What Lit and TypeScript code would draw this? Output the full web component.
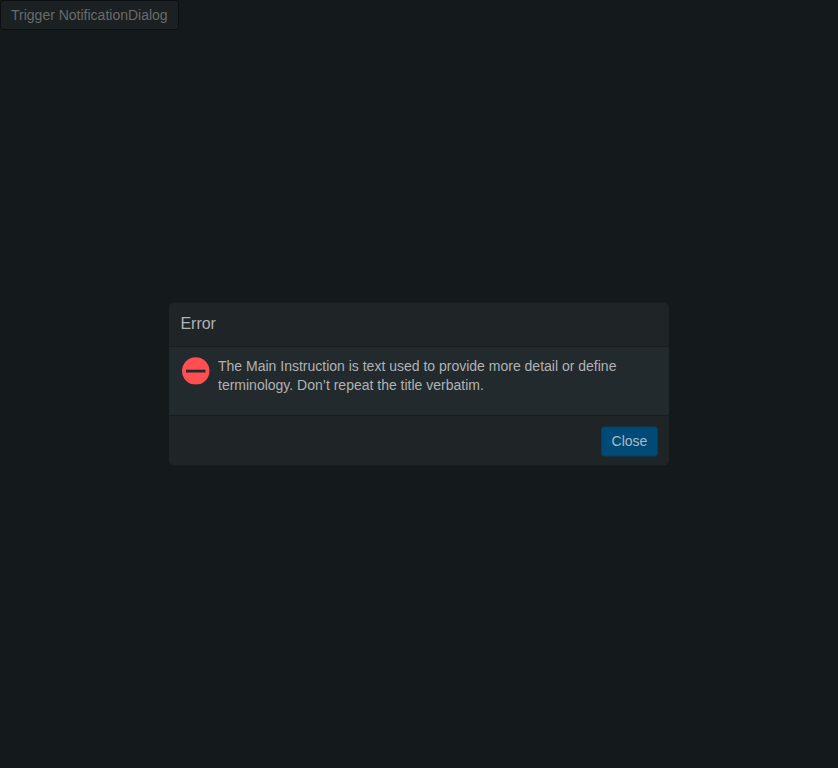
import { LitElement, html, css } from "lit";
import { customElement } from "lit/decorators.js";

@customElement("app-root")
export class AppRoot extends LitElement {
  static styles = css`
    :host {
      display: block;
      position: relative;
      height: 100vh;
      overflow: hidden;
      background: #14191c;
      font-family: "Liberation Sans", Arial, sans-serif;
      font-size: 14px;
    }
    button {
      box-sizing: border-box;
      display: block;
      margin: 0;
      padding: 0 10px;
      height: 30px;
      font: inherit;
      line-height: 28px;
      border-radius: 3px;
    }
    .trigger {
      color: #696b6b;
      background: #1b2022;
      border: 1px solid #0c0f11;
    }
    .dialog {
      position: absolute;
      top: 50%;
      left: 50%;
      transform: translate(-50%, -50%);
      width: 500px;
      height: 163px;
      display: flex;
      flex-direction: column;
      border-radius: 5px;
      overflow: hidden;
      background: #1f2427;
      color: #b0b2b3;
    }
    .header {
      box-sizing: border-box;
      height: 43px;
      padding: 0 11.4px;
      font-size: 16px;
      line-height: 42px;
    }
    .rule {
      height: 1px;
      background: #181c1f;
      transform: translateY(0.5px);
    }
    .content {
      flex: 1;
      display: flex;
      gap: 8px;
      padding: 10px 13px 0;
      background: #232a2e;
    }
    .icon {
      flex: none;
      width: 28px;
      height: 28px;
    }
    .message {
      margin: 0;
      line-height: 19px;
    }
    .footer {
      box-sizing: border-box;
      height: 50px;
      padding: 11px 11px 0;
      display: flex;
      justify-content: flex-end;
    }
    .close {
      width: 57px;
      padding: 0 0 1px;
      line-height: 27px;
      text-align: center;
      color: #acb9c1;
      background: #004a78;
      border: 1px solid #06405f;
    }
  `;

  render() {
    return html`
      <button class="trigger">Trigger NotificationDialog</button>
      <section class="dialog" role="dialog" aria-label="Error">
        <div class="header">Error</div>
        <div class="rule"></div>
        <div class="content">
          <svg class="icon" viewBox="0 0 28 28" aria-hidden="true">
            <circle cx="13.75" cy="14.5" r="13.7" fill="#ff4f52" />
            <rect x="4" y="13.2" width="19.5" height="2.8" fill="#232a2e" />
          </svg>
          <p class="message">
            The Main Instruction is text used to provide more detail or define<br />terminology. Don’t repeat the title verbatim.
          </p>
        </div>
        <div class="rule"></div>
        <div class="footer"><button class="close">Close</button></div>
      </section>
    `;
  }
}
